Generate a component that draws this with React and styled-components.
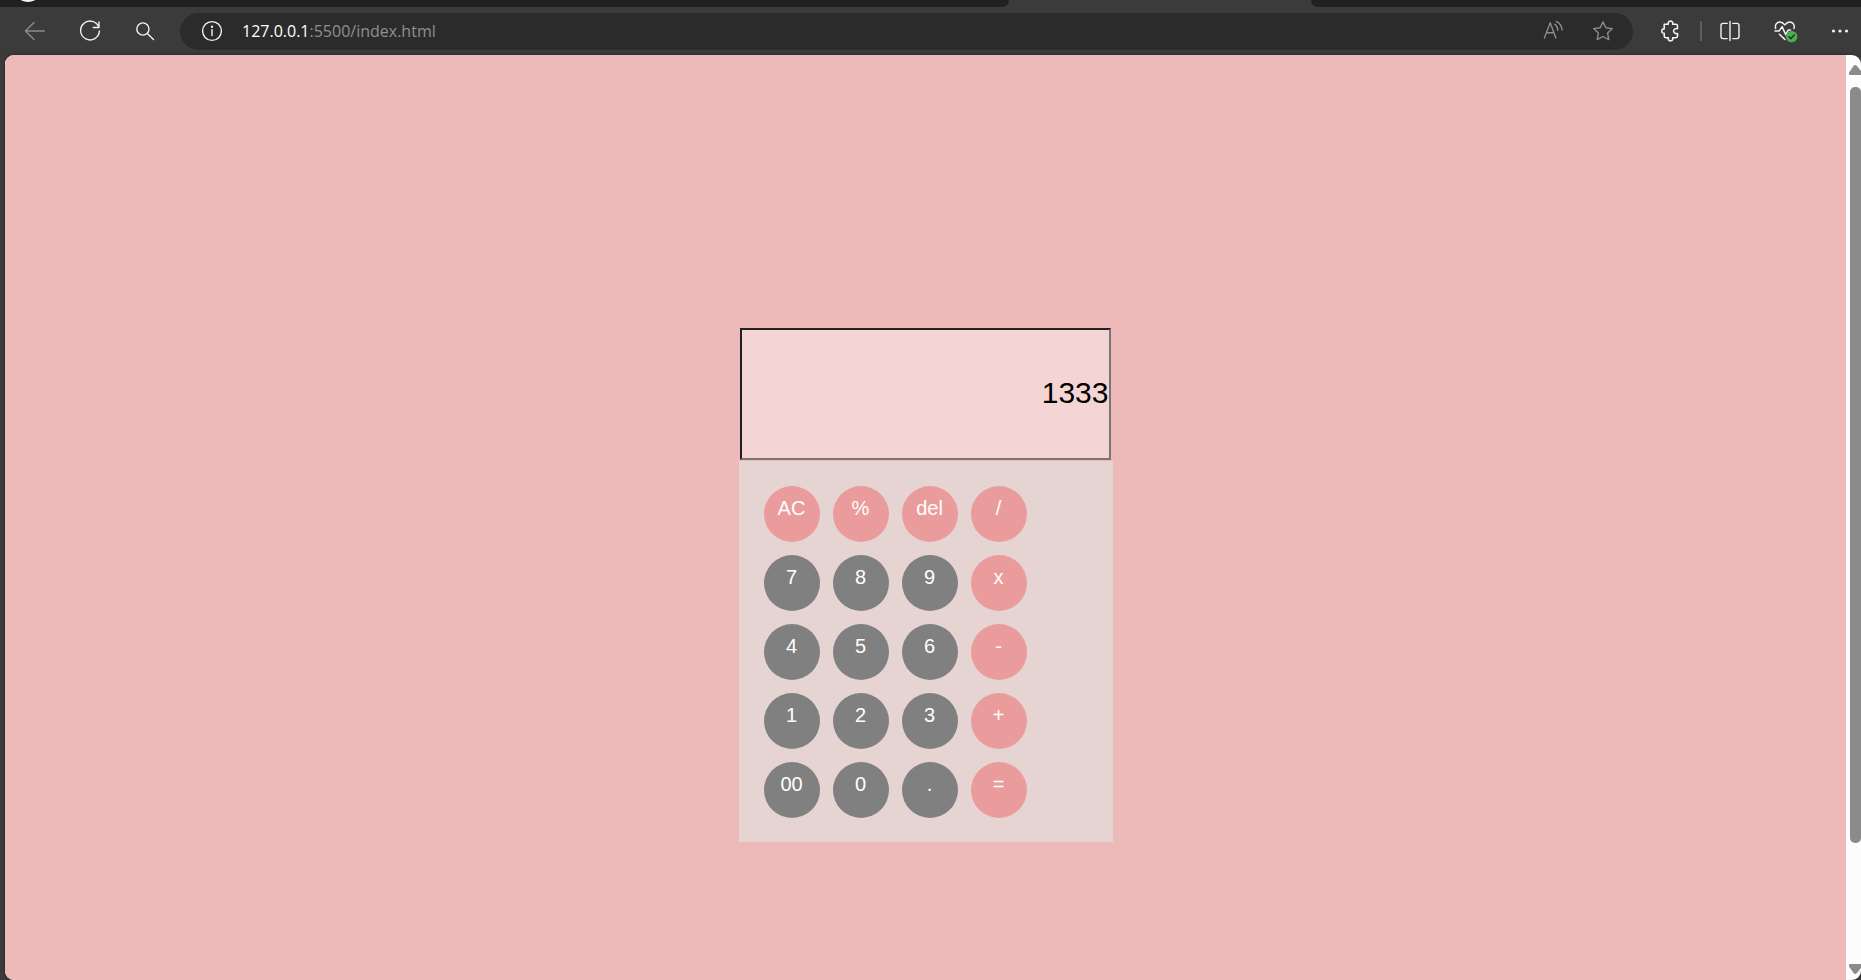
import React, { useState } from "react";
import styled, { createGlobalStyle } from "styled-components";

const GlobalStyle = createGlobalStyle`
  * { box-sizing: border-box; }
  body { margin: 0; background: #3b3b3b; font-family: "Liberation Sans", Arial, sans-serif; }
`;

const Browser = styled.div`
  display: flex;
  flex-direction: column;
  height: 100vh;
  overflow: hidden;
  background: #3b3b3b;
`;

const TabStrip = styled.div`
  display: flex;
  flex: none;
  height: 7px;
`;

const TabsBefore = styled.div`
  flex: 1;
  padding-left: 20px;
  background: #202020;
  border-bottom-right-radius: 10px;
`;

const ActiveTab = styled.div`
  width: 302px;
`;

const TabsAfter = styled.div`
  width: 550px;
  background: #202020;
  border-bottom-left-radius: 10px;
`;

const Favicon = styled.svg`
  display: block;
`;

const Toolbar = styled.header`
  display: flex;
  flex: none;
  align-items: center;
  height: 48px;
  padding-left: 7px;
`;

const IconButton = styled.button`
  display: flex;
  flex: none;
  align-items: center;
  justify-content: center;
  width: ${(p) => (p.$inBar ? 49 : 55)}px;
  height: 36px;
  padding: 0;
  border: 0;
  background: none;
  color: ${(p) => (p.$dim ? "#8c8c8c" : "#f2f2f2")};
`;

const AddressBar = styled.div`
  display: flex;
  flex: 1;
  align-items: center;
  height: 37px;
  margin: 0 12px 0 8px;
  padding: 0 6px 0 7px;
  border-radius: 19px;
  background: #2b2b2b;
`;

const Address = styled.div`
  flex: 1;
  padding-left: 6px;
  color: #8f8f8f;
  font: 16px/24px "Open Sans", "Noto Sans", sans-serif;
  white-space: nowrap;
  outline: none;
`;

const Host = styled.span`
  color: #ffffff;
`;

const Tools = styled.div`
  display: flex;
  flex: none;
  align-items: center;
  margin-right: -6px;
`;

const Divider = styled.span`
  width: 2px;
  height: 20px;
  background: #5c5c5c;
`;

const Viewport = styled.div`
  display: flex;
  flex: 1;
  min-height: 0;
  margin-left: 5px;
  overflow: hidden;
  border-radius: 9px;
  background: #fcfcfc;
  box-shadow: 0 0 3px #202020;
`;

const Page = styled.main`
  display: flex;
  flex: 1;
  flex-direction: column;
  align-items: center;
  padding-top: 273px;
  overflow: hidden;
  background: #edbab9;
`;

const ScrollBar = styled.div`
  display: flex;
  flex: none;
  flex-direction: column;
  align-items: flex-end;
  width: 15px;
  padding: 10px 0 6px;
`;

const Track = styled.div`
  flex: 1;
  width: 11px;
  margin: 12px 0;
`;

const Thumb = styled.div`
  height: 87.4%;
  border-radius: 5px;
  background: #8b8b8b;
`;

const Calculator = styled.section`
  width: 374px;
`;

const Display = styled.input`
  display: block;
  width: 371px;
  height: 132px;
  margin: 0 2px 1px 1px;
  padding: 0 0 2px;
  border: 2px solid;
  border-color: #212121 #767676 #767676 #212121;
  border-radius: 0;
  outline: none;
  background: #f5d5d3;
  color: #000000;
  font: 30px "Liberation Sans", Arial, sans-serif;
  text-align: right;
`;

const Keypad = styled.div`
  display: grid;
  grid-template-columns: repeat(4, 56px);
  grid-auto-rows: 56px;
  gap: 13px;
  padding: 25px 25px 24px;
  background: #e6d4d3;
`;

const Key = styled.button`
  display: flex;
  align-items: flex-start;
  justify-content: center;
  padding: 10px 0 0;
  border: 0;
  border-radius: 50%;
  background: ${(p) => (p.$accent ? "#ea9c9c" : "#808080")};
  color: #ffffff;
  font: 20px/24px "Liberation Sans", Arial, sans-serif;
`;

const KEYS = [
  "AC", "%", "del", "/",
  "7", "8", "9", "x",
  "4", "5", "6", "-",
  "1", "2", "3", "+",
  "00", "0", ".", "=",
];
const isDigit = (key) => /^[\d.]+$/.test(key);

function Icon({ width = 22, height = 22, children, stroke = 1.4 }) {
  return (
    <svg
      width={width}
      height={height}
      viewBox={`0 0 ${width} ${height}`}
      fill="none"
      stroke="currentColor"
      strokeWidth={stroke}
      strokeLinecap="round"
      strokeLinejoin="round"
      aria-hidden="true"
    >
      {children}
    </svg>
  );
}

const BackIcon = () => (
  <Icon><path d="M20.3 11H1.4M10 2.4 1.4 11l8.6 8.6" /></Icon>
);

const ReloadIcon = () => (
  <Icon><path d="M19.9 7.4A9.4 9.4 0 1 0 20.4 11M20 1.9v5.6h-5.7" /></Icon>
);

const SearchIcon = () => (
  <Icon><circle cx="8.9" cy="9" r="6.1" /><path d="m13.4 13.5 6.1 5.9" /></Icon>
);

const InfoIcon = () => (
  <Icon>
    <circle cx="11" cy="11" r="9.4" />
    <path d="M11 9.8v5.7" />
    <circle cx="11" cy="6.8" r=".5" fill="currentColor" />
  </Icon>
);

const ReadAloudIcon = () => (
  <Icon>
    <path d="m1.400 18 5.800-15.200L12.900 18M3.500 12.800h7.400" />
    <path d="M11.800 4.200c1.900 1.400 3 3.500 3 6M13.400 1.400c3.400 1.900 5.500 5 5.700 8.700" />
  </Icon>
);

const StarIcon = () => (
  <Icon><path d="m11 1.900 2.800 5.800 6.600.9-4.800 4.500 1.200 6.500-5.800-3.100-5.800 3.100 1.200-6.500-4.800-4.500 6.600-.9z" /></Icon>
);

const PuzzleIcon = () => (
  <Icon width={24} stroke={1.6}>
    <path d="M3.200 4.300h4.100c-.5-1.800.6-3.300 2.200-3.300s2.700 1.500 2.200 3.300h3.200q1.600 0 1.600 1.600v2.700c-2.200-.3-3.900.7-3.900 2.500s1.700 2.800 3.900 2.500v2.500q0 1.600-1.600 1.600h-3.200c.5 1.800-.6 3.100-2.200 3.100s-2.700-1.300-2.200-3.100H4.800q-1.600 0-1.600-1.600v-2.800c-1.600.1-2.400-.8-2.400-2.200s.8-2.300 2.400-2.200z" />
  </Icon>
);

const SplitIcon = () => (
  <Icon>
    <path d="M8.200 3.400H4Q2 3.400 2 5.400v11.200q0 2 2 2h4.200M13.800 3.400H18q2 0 2 2v11.200q0 2-2 2h-4.200M11 1.500v19" />
  </Icon>
);

const HealthIcon = () => (
  <Icon width={26} height={24} stroke={1.5}>
    <path d="M3.600 9.400C2.700 6 4.700 3 7.900 3c2.200 0 3.600 1.200 4.900 2.900C14.100 4.200 15.500 3 17.700 3c3.200 0 5.200 3 4.300 6.400" />
    <path d="M3 11.900h4.200l2.900-4.300 3.600 8 2.600-4.700h2.200M7.400 15.300l5.400 5.100" />
    <circle cx="19.600" cy="17.600" r="5.700" fill="#4caf50" stroke="none" />
    <path d="m16.900 17.800 1.900 1.900 3.600-3.900" stroke="#263327" />
  </Icon>
);

const MoreIcon = () => (
  <Icon>
    <g fill="currentColor" stroke="none">
      <circle cx="4.500" cy="11" r="1.600" />
      <circle cx="11" cy="11" r="1.600" />
      <circle cx="17.500" cy="11" r="1.600" />
    </g>
  </Icon>
);

const ArrowIcon = ({ down }) => (
  <svg width="12" height="10" viewBox="0 0 12 10" fill="#8b8b8b" aria-hidden="true">
    <path d={down ? "M0 1Q0 0 1 0H12V4L8 9Q6 11 4.500 9L0 2.500Z" : "M0 9Q0 10 1 10H12V6L8 1Q6-1 4.500 1L0 7.500Z"} />
  </svg>
);

export default function App() {
  const [value, setValue] = useState("1333");

  const press = (key) => {
    if (key === "AC") setValue("");
    else if (key === "del") setValue((v) => v.slice(0, -1));
    else if (key !== "=") setValue((v) => v + key);
  };

  return (
    <>
      <GlobalStyle />
      <Browser>
        <TabStrip>
          <TabsBefore>
            <Favicon width="16" height="3" viewBox="0 0 16 3" aria-hidden="true">
              <ellipse cx="8" cy="-3" rx="9" ry="5" fill="#f5f5f5" />
            </Favicon>
          </TabsBefore>
          <ActiveTab />
          <TabsAfter />
        </TabStrip>
        <Toolbar>
          <IconButton $dim aria-label="Back"><BackIcon /></IconButton>
          <IconButton aria-label="Refresh"><ReloadIcon /></IconButton>
          <IconButton aria-label="Search"><SearchIcon /></IconButton>
          <AddressBar>
            <IconButton $inBar aria-label="Site information"><InfoIcon /></IconButton>
            <Address role="textbox" tabIndex={0} aria-label="Address">
              <Host>127.0.0.1</Host>:5500/index.html
            </Address>
            <IconButton $inBar $dim aria-label="Read aloud"><ReadAloudIcon /></IconButton>
            <IconButton $inBar $dim aria-label="Add to favorites"><StarIcon /></IconButton>
          </AddressBar>
          <Tools>
            <IconButton aria-label="Extensions"><PuzzleIcon /></IconButton>
            <Divider />
            <IconButton aria-label="Split screen"><SplitIcon /></IconButton>
            <IconButton aria-label="Browser essentials"><HealthIcon /></IconButton>
            <IconButton aria-label="Settings and more"><MoreIcon /></IconButton>
          </Tools>
        </Toolbar>
        <Viewport>
          <Page>
            <Calculator>
              <Display
                type="text"
                aria-label="Result"
                value={value}
                onChange={(e) => setValue(e.target.value)}
              />
              <Keypad>
                {KEYS.map((key, i) => (
                  <Key key={key} type="button" $accent={i < 4 || !isDigit(key)} onClick={() => press(key)}>
                    {key}
                  </Key>
                ))}
              </Keypad>
            </Calculator>
          </Page>
          <ScrollBar>
            <ArrowIcon />
            <Track><Thumb /></Track>
            <ArrowIcon down />
          </ScrollBar>
        </Viewport>
      </Browser>
    </>
  );
}
